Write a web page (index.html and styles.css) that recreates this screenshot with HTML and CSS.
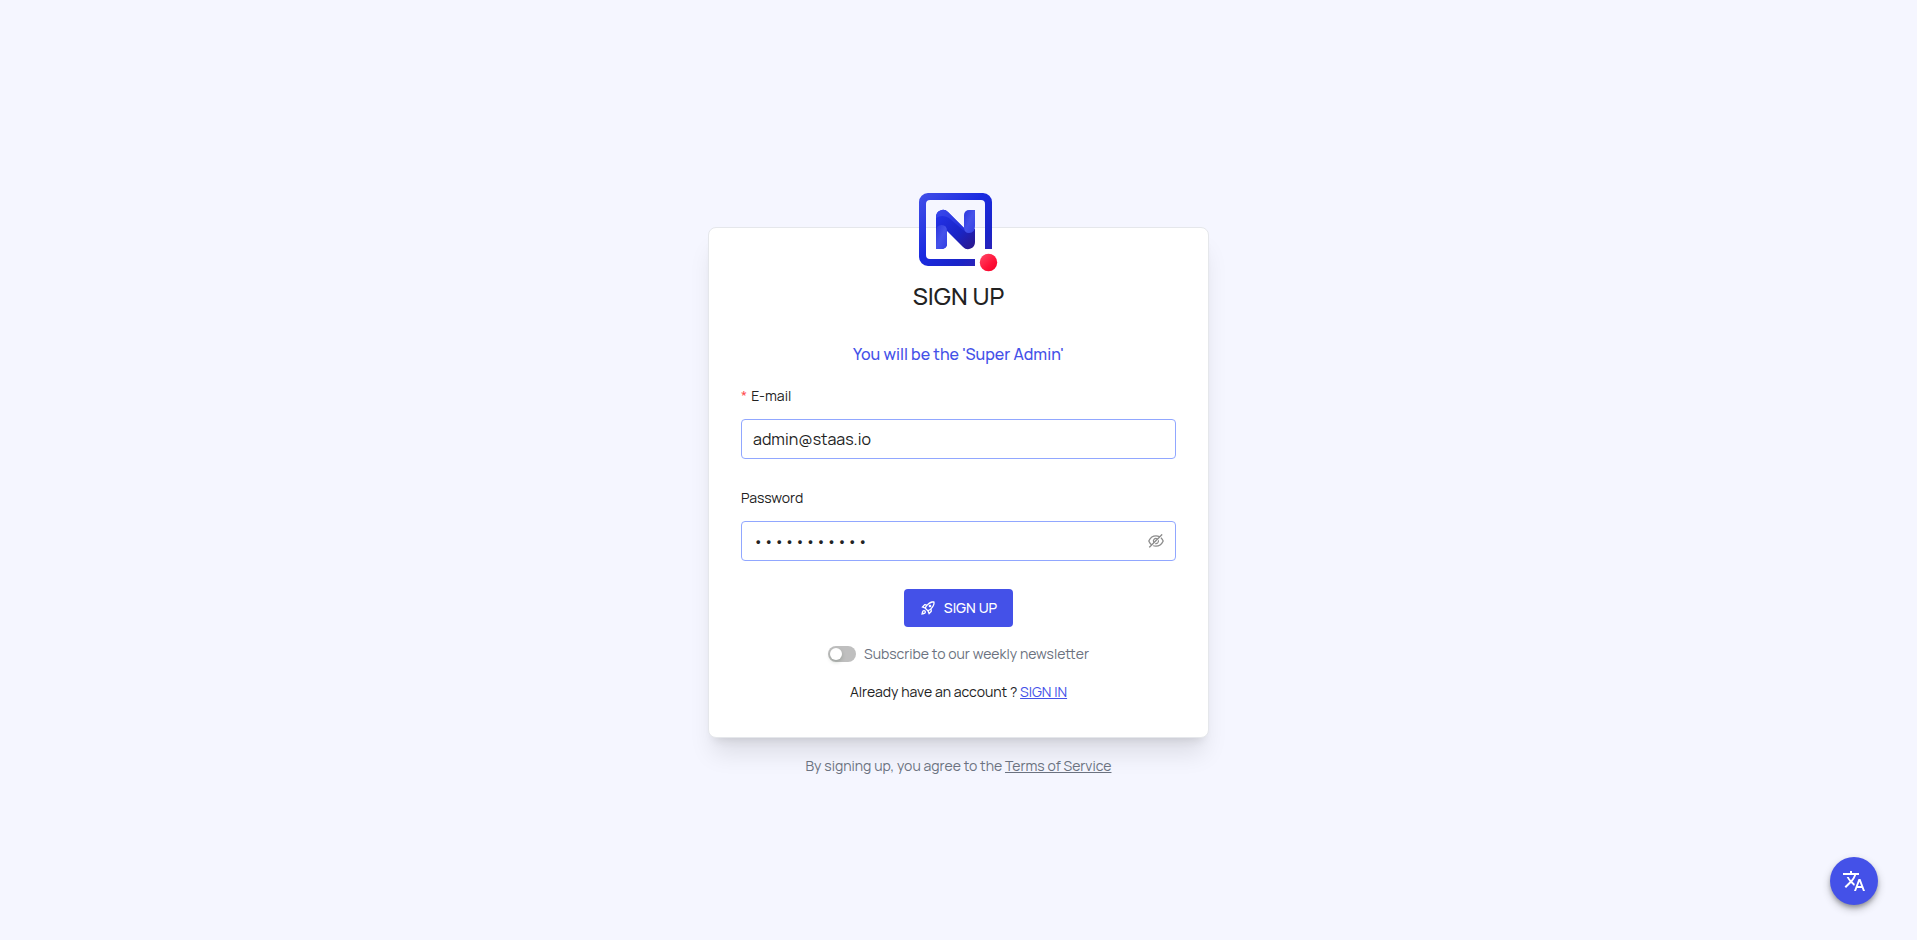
FILE: index.html
```html
<!DOCTYPE html>
<html lang="en">
<head>
<meta charset="utf-8">
<meta name="viewport" content="width=device-width, initial-scale=1">
<title>Sign up</title>
<link rel="stylesheet" href="styles.css">
</head>
<body class="page">
<main class="signup">
  <form class="card">
    <svg class="logo" viewBox="0 0 79 79" role="img" aria-label="Logo">
      <defs>
        <linearGradient id="frame" x1="0" y1="0" x2="1" y2="1">
          <stop offset="0" stop-color="#4350e8"/><stop offset=".45" stop-color="#1a2be0"/><stop offset=".75" stop-color="#1a24c8"/><stop offset="1" stop-color="#3a22a8"/>
        </linearGradient>
        <linearGradient id="ribbon" x1="0" y1="0" x2="1" y2="1">
          <stop offset="0" stop-color="#2434ee"/><stop offset=".6" stop-color="#1a24c4"/><stop offset="1" stop-color="#2c1688"/>
        </linearGradient>
        <linearGradient id="fold" x1="0" y1="0" x2="1" y2="1">
          <stop offset="0" stop-color="#3a48ec"/><stop offset="1" stop-color="#1f2cd8"/>
        </linearGradient>
        <linearGradient id="stem" x1="0" y1="0" x2="1" y2="1">
          <stop offset="0" stop-color="#2b36de"/><stop offset=".5" stop-color="#4552ea"/><stop offset="1" stop-color="#3340e4"/>
        </linearGradient>
        <linearGradient id="dot" x1="0" y1="0" x2="1" y2="1">
          <stop offset="0" stop-color="#ff4a68"/><stop offset=".6" stop-color="#ff1238"/><stop offset="1" stop-color="#f00028"/>
        </linearGradient>
      </defs>
      <path fill="url(#frame)" d="M9 0H64a9 9 0 0 1 9 9V56H66V11a4 4 0 0 0-4-4H11a4 4 0 0 0-4 4V62a4 4 0 0 0 4 4H56v7H9a9 9 0 0 1-9-9V9a9 9 0 0 1 9-9z"/>
      <path fill="url(#ribbon)" d="M17 56V24a7 7 0 0 1 12-5L46 36H56V49a7 7 0 0 1-12 5L28 38V51a5 5 0 0 1-5 5z"/>
      <path fill="url(#stem)" d="M17 56V38q0-6 5.500-6T28 38V51a5 5 0 0 1-5 5z"/>
      <path fill="url(#fold)" d="M17 25v-1a7 7 0 0 1 12-5L48 38 44 37 30 25q-7-4-13 0z"/>
      <path fill="url(#stem)" d="M56 17V33q0 7-6 7-5 0-5-6V22a5 5 0 0 1 5-5z"/>
      <circle cx="69.500" cy="69.500" r="8.700" fill="url(#dot)"/>
    </svg>
    <h1 class="title">SIGN UP</h1>
    <p class="role">You will be the 'Super Admin'</p>
    <div class="field">
      <label class="label" for="email"><span class="required">*</span>E-mail</label>
      <input class="input" id="email" type="email" value="admin@staas.io">
    </div>
    <div class="field">
      <label class="label" for="password">Password</label>
      <div class="password">
        <input class="input input-secret" id="password" type="password" value="password123">
        <button class="reveal" type="button" aria-label="Show password">
          <svg viewBox="64 64 896 896"><path d="M942.2 486.2Q889.47 375.11 816.7 305l-50.88 50.88C807.31 395.53 843.45 447.4 874.7 512 791.5 684.2 673.4 766 512 766q-72.67 0-133.87-22.38L323 798.75Q408 838 512 838q288.3 0 430.2-300.3a60.29 60.29 0 000-51.5zm-63.57-320.64L836 122.88a8 8 0 00-11.32 0L715.31 232.2Q624.86 186 512 186q-288.3 0-430.2 300.3a60.3 60.3 0 000 51.5q56.69 119.4 136.5 191.41L112.48 835a8 8 0 000 11.31L155.17 889a8 8 0 0011.31 0l712.15-712.12a8 8 0 000-11.32zM149.3 512C232.6 339.8 350.7 258 512 258c54.54 0 104.13 9.36 149.12 28.39l-70.3 70.3a176 176 0 00-238.13 238.13l-83.42 83.42C223.1 637.49 183.3 582.28 149.3 512zm246.7 0a112.11 112.11 0 01146.2-106.69L401.31 546.2A112 112 0 01396 512z"/><path d="M508 624c-3.46 0-6.87-.16-10.25-.47l-52.82 52.82a176.09 176.09 0 00227.42-227.42l-52.82 52.82c.31 3.38.47 6.79.47 10.25a111.94 111.94 0 01-112 112z"/></svg>
        </button>
      </div>
    </div>
    <button class="submit" type="submit">
      <svg class="submit-icon" viewBox="0 0 24 24"><path d="M6 15c-.83 0-1.58.34-2.12.88C2.7 17.06 2 22 2 22s4.94-.7 6.12-1.88C8.66 19.58 9 18.83 9 18c0-1.66-1.34-3-3-3zm.71 3.71c-.28.28-2.17.76-2.17.76s.47-1.88.76-2.17c.17-.19.42-.3.7-.3.55 0 1 .45 1 1 0 .28-.11.53-.29.71zm10.71-5.06c6.36-6.36 4.24-11.31 4.24-11.31S16.71.22 10.35 6.58l-2.49-.5c-.65-.13-1.33.08-1.81.55L2 10.69l5 2.14L11.17 17l2.14 5 4.05-4.05c.47-.47.68-1.15.55-1.81l-.49-2.49zM7.41 10.83l-1.91-.82 1.97-1.97 1.44.29c-.57.83-1.08 1.7-1.5 2.5zm6.58 7.67l-.82-1.91c.8-.42 1.67-.93 2.49-1.5l.29 1.44-1.96 1.97zM16 12.24c-1.32 1.32-3.38 2.4-4.04 2.73l-2.93-2.93c.32-.65 1.4-2.71 2.73-4.04 4.68-4.68 8.23-3.99 8.23-3.99s.69 3.55-3.99 8.23zM15 11c1.1 0 2-.9 2-2s-.9-2-2-2-2 .9-2 2 .9 2 2 2z"/></svg>
      SIGN UP
    </button>
    <label class="newsletter" for="newsletter">
      <input class="switch" id="newsletter" type="checkbox" role="switch">
      Subscribe to our weekly newsletter
    </label>
    <p class="account">Already have an account ? <a class="link" href="#">SIGN IN</a></p>
  </form>
  <p class="terms">By signing up, you agree to the <a class="terms-link" href="#">Terms of Service</a></p>
</main>
<button class="language" type="button" aria-label="Change language">
  <svg viewBox="0 0 24 24"><path d="M12.87 15.07l-2.54-2.51.03-.03c1.74-1.94 2.98-4.17 3.71-6.53H17V4h-7V2H8v2H1v1.99h11.17C11.5 7.92 10.44 9.75 9 11.35 8.07 10.32 7.3 9.19 6.69 8h-2c.73 1.63 1.73 3.17 2.98 4.56l-5.09 5.02L4 19l5-5 3.11 3.11.76-2.04zM18.5 10h-2L12 22h2l1.12-3h4.75L21 22h2l-4.5-12zm-2.62 7l1.62-4.33L19.12 17h-3.24z"/></svg>
</button>
</body>
</html>
```
FILE: styles.css
```css
* {
  box-sizing: border-box;
}

.page {
  margin: 0;
  min-height: 100vh;
  display: flex;
  background: #f5f6ff;
  color: #222;
  font-family: Manrope, Inter, "Open Sans", sans-serif;
  font-size: 14px;
  font-weight: 400;
  line-height: 22px;
}

.signup {
  flex: 1;
  display: flex;
  flex-direction: column;
  align-items: center;
  justify-content: center;
  padding: 64px 16px 0;
}

.card {
  width: 100%;
  max-width: 501px;
  display: flex;
  flex-direction: column;
  align-items: center;
  padding: 0 32px 34px;
  background: #fff;
  border: 1px solid #e5e7eb;
  border-radius: 8px;
  box-shadow: 0 20px 25px -5px rgba(0, 0, 0, .1), 0 8px 10px -6px rgba(0, 0, 0, .1);
}

.logo {
  width: 79px;
  height: 79px;
  margin-top: -35px;
}

.title {
  margin: 8px 0 28px;
  font-size: 24px;
  font-weight: 500;
  line-height: 32px;
}

.role {
  margin: 0 0 17px;
  color: #4451e8;
  font-size: 16px;
  font-weight: 500;
  line-height: 28px;
}

.field {
  width: 100%;
  display: flex;
  flex-direction: column;
  gap: 12px;
  margin-bottom: 28px;
}

.label {
  display: flex;
  align-items: center;
}

.required {
  margin-right: 4px;
  color: #ff4d4f;
}

.input {
  width: 100%;
  height: 40px;
  padding: 0 11px;
  border: 1px solid #91a7ff;
  border-radius: 4px;
  background: #fff;
  color: #222;
  font: inherit;
  font-size: 16px;
  outline: none;
}

.password {
  display: grid;
  align-items: center;
}

.password > * {
  grid-area: 1 / 1;
}

.input-secret {
  padding-right: 40px;
}

.reveal {
  justify-self: end;
  display: flex;
  margin-right: 12px;
  padding: 0;
  border: 0;
  background: none;
  cursor: pointer;
}

.reveal svg {
  width: 16px;
  height: 16px;
  fill: #8c8c8c;
}

.submit {
  display: flex;
  align-items: center;
  gap: 8px;
  height: 38px;
  padding: 0 16px;
  border: 0;
  border-radius: 4px;
  background: #4451e8;
  color: #fff;
  font: inherit;
  font-weight: 500;
  cursor: pointer;
}

.submit-icon {
  width: 16px;
  height: 16px;
  fill: currentColor;
}

.newsletter {
  display: flex;
  align-items: center;
  gap: 8px;
  margin: 16px 0;
  color: #6b7280;
}

.switch {
  appearance: none;
  display: flex;
  width: 28px;
  height: 16px;
  margin: 0;
  padding: 2px;
  border-radius: 8px;
  background: #bfbfbf;
}

.switch::before {
  content: "";
  width: 12px;
  height: 12px;
  border-radius: 50%;
  background: #fff;
  box-shadow: 0 2px 4px rgba(0, 35, 11, .2);
}

.switch:checked {
  justify-content: flex-end;
  background: #4451e8;
}

.account {
  margin: 0;
}

.link {
  color: #4451e8;
}

.terms {
  margin: 17px 0 0;
  color: #6b7280;
}

.terms-link {
  color: inherit;
}

.language {
  position: fixed;
  right: 39px;
  bottom: 35px;
  width: 48px;
  height: 48px;
  display: grid;
  place-items: center;
  padding: 0;
  border: 0;
  border-radius: 50%;
  background: #4451e8;
  box-shadow: 0 3px 5px -1px rgba(0, 0, 0, .3), 0 4px 8px rgba(0, 0, 0, .24);
  cursor: pointer;
}

.language svg {
  width: 24px;
  height: 24px;
  fill: #fff;
}
```
